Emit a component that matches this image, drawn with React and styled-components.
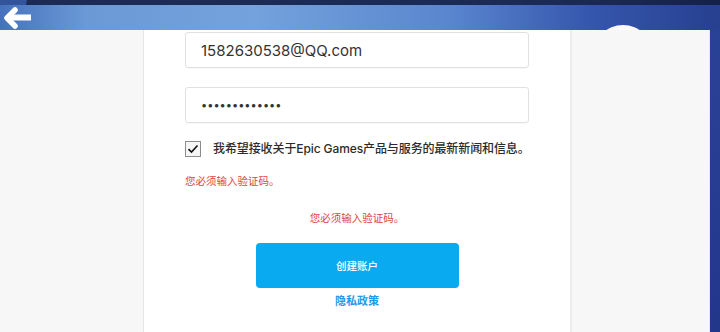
import React from "react";
import styled, { createGlobalStyle } from "styled-components";

const Global = createGlobalStyle`
  html, body { margin: 0; padding: 0; }
  body { width: 720px; height: 332px; overflow: hidden; background: #f7f7f7; }
  * { box-sizing: border-box; }
`;

const Page = styled.div`
  width: 720px;
  height: 332px;
  display: flex;
  flex-direction: column;
  font-family: Inter, "Noto Sans CJK SC", sans-serif;
`;

const TopStrip = styled.div`
  height: 5px;
  flex: none;
  background: linear-gradient(100deg, #33549a 0 26px, #1d2b54 27px, #1b2a55 80%, #16214a 100%);
`;

const Header = styled.header`
  position: relative;
  height: 25px;
  flex: none;
  display: flex;
  align-items: center;
  padding-left: 3px;
  overflow: hidden;
  background: linear-gradient(90deg, #4672bd 0%, #6a99d6 12%, #74a2dc 35%, #5a86cf 62%, #3556ad 82%, #27408f 100%);
`;

const BackButton = styled.button`
  border: 0;
  background: none;
  padding: 0;
  width: 30px;
  height: 22px;
  display: flex;
  align-items: center;
  cursor: pointer;
`;

const Moon = styled.div`
  position: absolute;
  left: 593px;
  top: 20px;
  width: 60px;
  height: 60px;
  border-radius: 50%;
  background: radial-gradient(circle at 50% 15%, #ffffff 0%, #f6f0ec 35%, #e6dcd6 100%);
`;

const Main = styled.div`
  flex: 1;
  display: flex;
  position: relative;
`;

const SidePanel = styled.div`
  width: ${(p) => p.$w}px;
  flex: none;
  background: #f7f7f7;
  border-left: ${(p) => (p.$left ? "2px solid #ececec" : "0")};
  border-right: ${(p) => (p.$right ? "1px solid #e6e6e6" : "0")};
`;

const Edge = styled.div`
  width: 10px;
  flex: none;
  background: linear-gradient(180deg, #2a4296 0%, #22378a 100%);
`;

const Card = styled.main`
  width: 426px;
  flex: none;
  background: #ffffff;
  padding: 2px 41px 0;
  display: flex;
  flex-direction: column;
`;

const Field = styled.div`
  height: 36px;
  border: 1px solid #e1e1e1;
  border-radius: 3px;
  box-shadow: 0 1px 1px rgba(0, 0, 0, 0.03);
  margin-top: ${(p) => p.$mt || 0}px;
  display: flex;
  align-items: center;
  padding-left: 15px;
  font-size: ${(p) => (p.$dots ? "11px" : "15px")};
  color: #333;
  letter-spacing: 0;
`;

const CheckRow = styled.label`
  margin-top: 18px;
  display: flex;
  align-items: center;
  gap: 12px;
  font-size: 12px;
  font-weight: 500;
  color: #2b2b2b;
  line-height: 16px;
  white-space: nowrap;
  letter-spacing: -0.1px;
`;

const Box = styled.span`
  width: 16px;
  height: 16px;
  border: 1px solid #8c8c8c;
  background: #f6f6f6;
  display: flex;
  align-items: center;
  justify-content: center;
  flex: none;
`;

const ErrorText = styled.div`
  margin-top: ${(p) => p.$mt}px;
  font-size: 10.5px;
  line-height: 14px;
  color: #d9463f;
  text-align: ${(p) => (p.$center ? "center" : "left")};
`;

const Submit = styled.button`
  margin: 17px auto 0;
  width: 203px;
  height: 45px;
  border: 0;
  border-radius: 4px;
  background: #0aaaf0;
  color: #fff;
  font-family: inherit;
  font-size: 10.5px;
  font-weight: 500;
  cursor: pointer;
`;

const Privacy = styled.a`
  margin-top: 5px;
  text-align: center;
  font-size: 11px;
  line-height: 16px;
  font-weight: 700;
  color: #1f9be6;
  text-decoration: none;
`;

export default function App() {
  return (
    <>
      <Global />
      <Page>
        <TopStrip />
        <Header>
          <BackButton aria-label="back">
            <svg width="28" height="22" viewBox="0 0 28 22">
              <path d="M27 10.5 H8" stroke="#fff" strokeWidth="6" strokeLinecap="round" />
              <path d="M12 3 L4 11 L12 19" stroke="#fff" strokeWidth="5.5" fill="none" strokeLinecap="round" strokeLinejoin="round" />
            </svg>
          </BackButton>
          <Moon />
        </Header>
        <Main>
          <SidePanel $w={144} $right />
          <Card>
            <Field>1582630538@QQ.com</Field>
            <Field $mt={19} $dots>•••••••••••••</Field>
            <CheckRow>
              <Box>
                <svg width="12" height="10" viewBox="0 0 12 10">
                  <path d="M1.5 5.2 L4.5 8 L10.5 1.5" stroke="#111" strokeWidth="1.6" fill="none" />
                </svg>
              </Box>
              我希望接收关于Epic Games产品与服务的最新新闻和信息。
            </CheckRow>
            <ErrorText $mt={18}>您必须输入验证码。</ErrorText>
            <ErrorText $mt={23} $center>您必须输入验证码。</ErrorText>
            <Submit>创建账户</Submit>
            <Privacy href="#">隐私政策</Privacy>
          </Card>
          <SidePanel $w={140} $left $right />
          <Edge />
        </Main>
      </Page>
    </>
  );
}
